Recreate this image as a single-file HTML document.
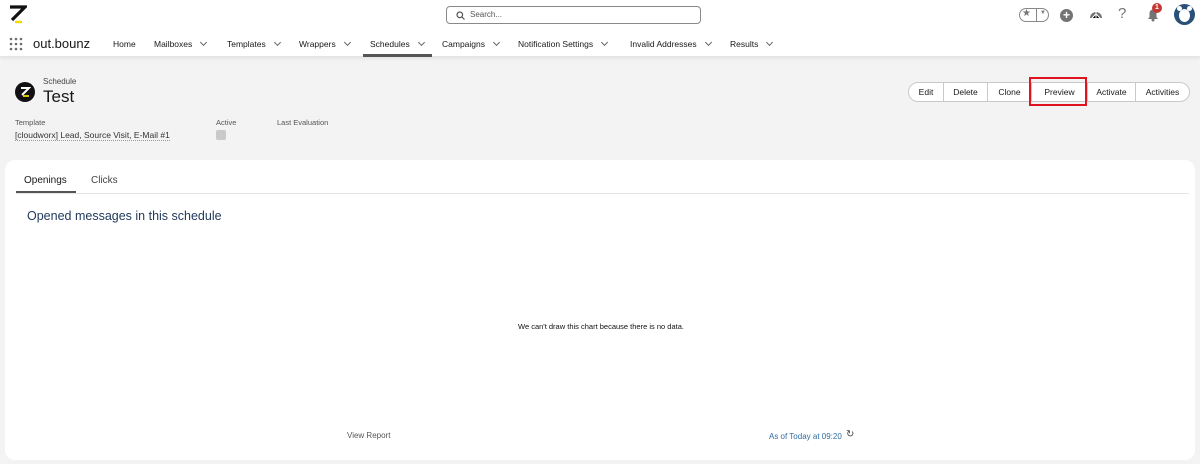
<!DOCTYPE html>
<html><head><style>
*{box-sizing:border-box;margin:0;padding:0}
body{width:1200px;height:464px;background:#f3f3f3;font-family:"Liberation Sans",sans-serif;position:relative;overflow:hidden;color:#181818}
.a{position:absolute;white-space:nowrap}
.hdr{position:absolute;left:0;top:0;width:1200px;height:57px;background:#fff;border-bottom:1px solid #e5e5e5;box-shadow:0 2px 3px rgba(0,0,0,.06)}
.nav{font-size:8.5px;color:#181818;top:39px}
.chev{display:inline-block;width:5px;height:5px;border-right:1px solid #666;border-bottom:1px solid #666;transform:rotate(45deg);margin-left:9px;position:relative;top:-2px}
.btns{position:absolute;left:908px;top:82px;height:20px;display:flex;border:1px solid #c9c9c9;border-radius:10px;background:#fff;width:282px}
.btns div{font-size:8.5px;color:#181818;line-height:18px;border-left:1px solid #c9c9c9;text-align:center}
.btns div:first-child{border-left:none}
.card{position:absolute;left:5px;top:160px;width:1190px;height:300px;background:#fff;border-radius:10px}
</style></head><body>
<div class="hdr"></div>
<svg class="a" style="left:9px;top:5px" width="18" height="20" viewBox="0 0 18 20"><path d="M1 2h15L3 15" stroke="#111" stroke-width="3.2" fill="none"/><path d="M6 17h7" stroke="#f5d800" stroke-width="2.5"/></svg>
<div class="a" style="left:446px;top:6px;width:255px;height:18px;border:1px solid #8a8a8a;border-radius:4px"></div>
<svg class="a" style="left:456px;top:11px" width="9" height="9"><circle cx="3.8" cy="3.8" r="2.8" stroke="#555" fill="none" stroke-width="1.2"/><path d="M6 6l2.5 2.5" stroke="#555" stroke-width="1.2"/></svg>
<div class="a" style="left:470px;top:10px;font-size:8px;color:#555">Search...</div>
<div class="a" style="left:1019px;top:8px;width:30px;height:14px;border:1px solid #888;border-radius:7px"></div>
<div class="a" style="left:1022px;top:8px;font-size:10px;color:#777">★</div>
<div class="a" style="left:1036px;top:9px;width:1px;height:12px;background:#888"></div>
<div class="a" style="left:1040px;top:10px;font-size:6px;color:#777">▼</div>
<div class="a" style="left:1060px;top:9px;width:13px;height:13px;border-radius:50%;background:#747474;color:#fff;font-size:12px;line-height:13px;text-align:center;font-weight:bold">+</div>
<svg class="a" style="left:1089px;top:8px" width="14" height="14"><path d="M1 10a6 6 0 0 1 12 0z" fill="#747474"/><path d="M7 4v6M3 10l4-4 4 4" stroke="#fff" stroke-width="1"/></svg>
<div class="a" style="left:1118px;top:5px;font-size:15px;color:#747474">?</div>
<svg class="a" style="left:1146px;top:7px" width="14" height="15"><path d="M2 12h10l-1.5-2V6a3.5 3.5 0 0 0-7 0v4z" fill="#747474"/><circle cx="7" cy="13" r="1.5" fill="#747474"/></svg>
<div class="a" style="left:1152px;top:3px;width:10px;height:10px;border-radius:50%;background:#c23934;color:#fff;font-size:7px;line-height:10px;text-align:center;font-weight:bold">1</div>
<div class="a" style="left:1174px;top:4px;width:21px;height:21px;border-radius:50%;background:#2a5078"></div>
<div class="a" style="left:1177px;top:6px;width:5px;height:5px;border-radius:50%;background:#fff"></div>
<div class="a" style="left:1187px;top:6px;width:5px;height:5px;border-radius:50%;background:#fff"></div>
<div class="a" style="left:1179px;top:9px;width:11px;height:13px;border-radius:50%;background:#fff"></div>
<svg class="a" style="left:9px;top:37px" width="14" height="14"><g fill="#706e6b"><circle cx="2" cy="2" r="1.3"/><circle cx="7" cy="2" r="1.3"/><circle cx="12" cy="2" r="1.3"/><circle cx="2" cy="7" r="1.3"/><circle cx="7" cy="7" r="1.3"/><circle cx="12" cy="7" r="1.3"/><circle cx="2" cy="12" r="1.3"/><circle cx="7" cy="12" r="1.3"/><circle cx="12" cy="12" r="1.3"/></g></svg>
<div class="a" style="left:33px;top:36px;font-size:13px;color:#181818">out.bounz</div>
<div class="a nav" style="left:113px">Home</div>
<div class="a nav" style="left:154px">Mailboxes<span class="chev"></span></div>
<div class="a nav" style="left:227px">Templates<span class="chev"></span></div>
<div class="a nav" style="left:299px">Wrappers<span class="chev"></span></div>
<div class="a nav" style="left:370px">Schedules<span class="chev"></span></div>
<div class="a" style="left:363px;top:54px;width:69px;height:3px;background:#555"></div>
<div class="a nav" style="left:442px">Campaigns<span class="chev"></span></div>
<div class="a nav" style="left:518px">Notification Settings<span class="chev"></span></div>
<div class="a nav" style="left:630px">Invalid Addresses<span class="chev"></span></div>
<div class="a nav" style="left:730px">Results<span class="chev"></span></div>

<div class="a" style="left:15px;top:82px;width:20px;height:20px;border-radius:50%;background:#111"></div>
<svg class="a" style="left:19px;top:86px" width="12" height="12"><path d="M2 2h8L3 9" stroke="#fff" stroke-width="2" fill="none"/><path d="M4 10h6" stroke="#f5d800" stroke-width="1.8"/></svg>
<div class="a" style="left:43px;top:77px;font-size:8px;color:#444">Schedule</div>
<div class="a" style="left:43px;top:87px;font-size:17px;color:#181818">Test</div>
<div class="a" style="left:15px;top:118px;font-size:7.5px;color:#555">Template</div>
<div class="a" style="left:15px;top:130px;font-size:8.5px;color:#333;border-bottom:1px dotted #999">[cloudworx] Lead, Source Visit, E-Mail #1</div>
<div class="a" style="left:216px;top:118px;font-size:7.5px;color:#555">Active</div>
<div class="a" style="left:216px;top:130px;width:10px;height:10px;border-radius:2px;background:#c9c9c9"></div>
<div class="a" style="left:277px;top:118px;font-size:7.5px;color:#555">Last Evaluation</div>

<div class="btns"><div style="width:34px">Edit</div><div style="width:44px">Delete</div><div style="width:44px">Clone</div><div style="width:56px">Preview</div><div style="width:48px">Activate</div><div style="width:54px">Activities</div></div>
<div class="a" style="left:1029px;top:77px;width:58px;height:29px;border:2px solid #e0141e"></div>

<div class="card"></div>
<div class="a" style="left:16px;top:193px;width:1173px;height:1px;background:#e5e5e5"></div>
<div class="a" style="left:24px;top:175px;font-size:10px;color:#181818">Openings</div>
<div class="a" style="left:16px;top:191px;width:60px;height:2px;background:#555"></div>
<div class="a" style="left:91px;top:175px;font-size:10px;color:#444">Clicks</div>
<div class="a" style="left:27px;top:209px;font-size:12.5px;color:#223a5e">Opened messages in this schedule</div>
<div class="a" style="left:518px;top:322px;font-size:7.5px;color:#111">We can't draw this chart because there is no data.</div>
<div class="a" style="left:347px;top:431px;font-size:8px;color:#555">View Report</div>
<div class="a" style="left:769px;top:432px;font-size:8px;color:#2e6da4">As of Today at 09:20</div>
<div class="a" style="left:846px;top:429px;font-size:10px;color:#444">↻</div>
</body></html>
